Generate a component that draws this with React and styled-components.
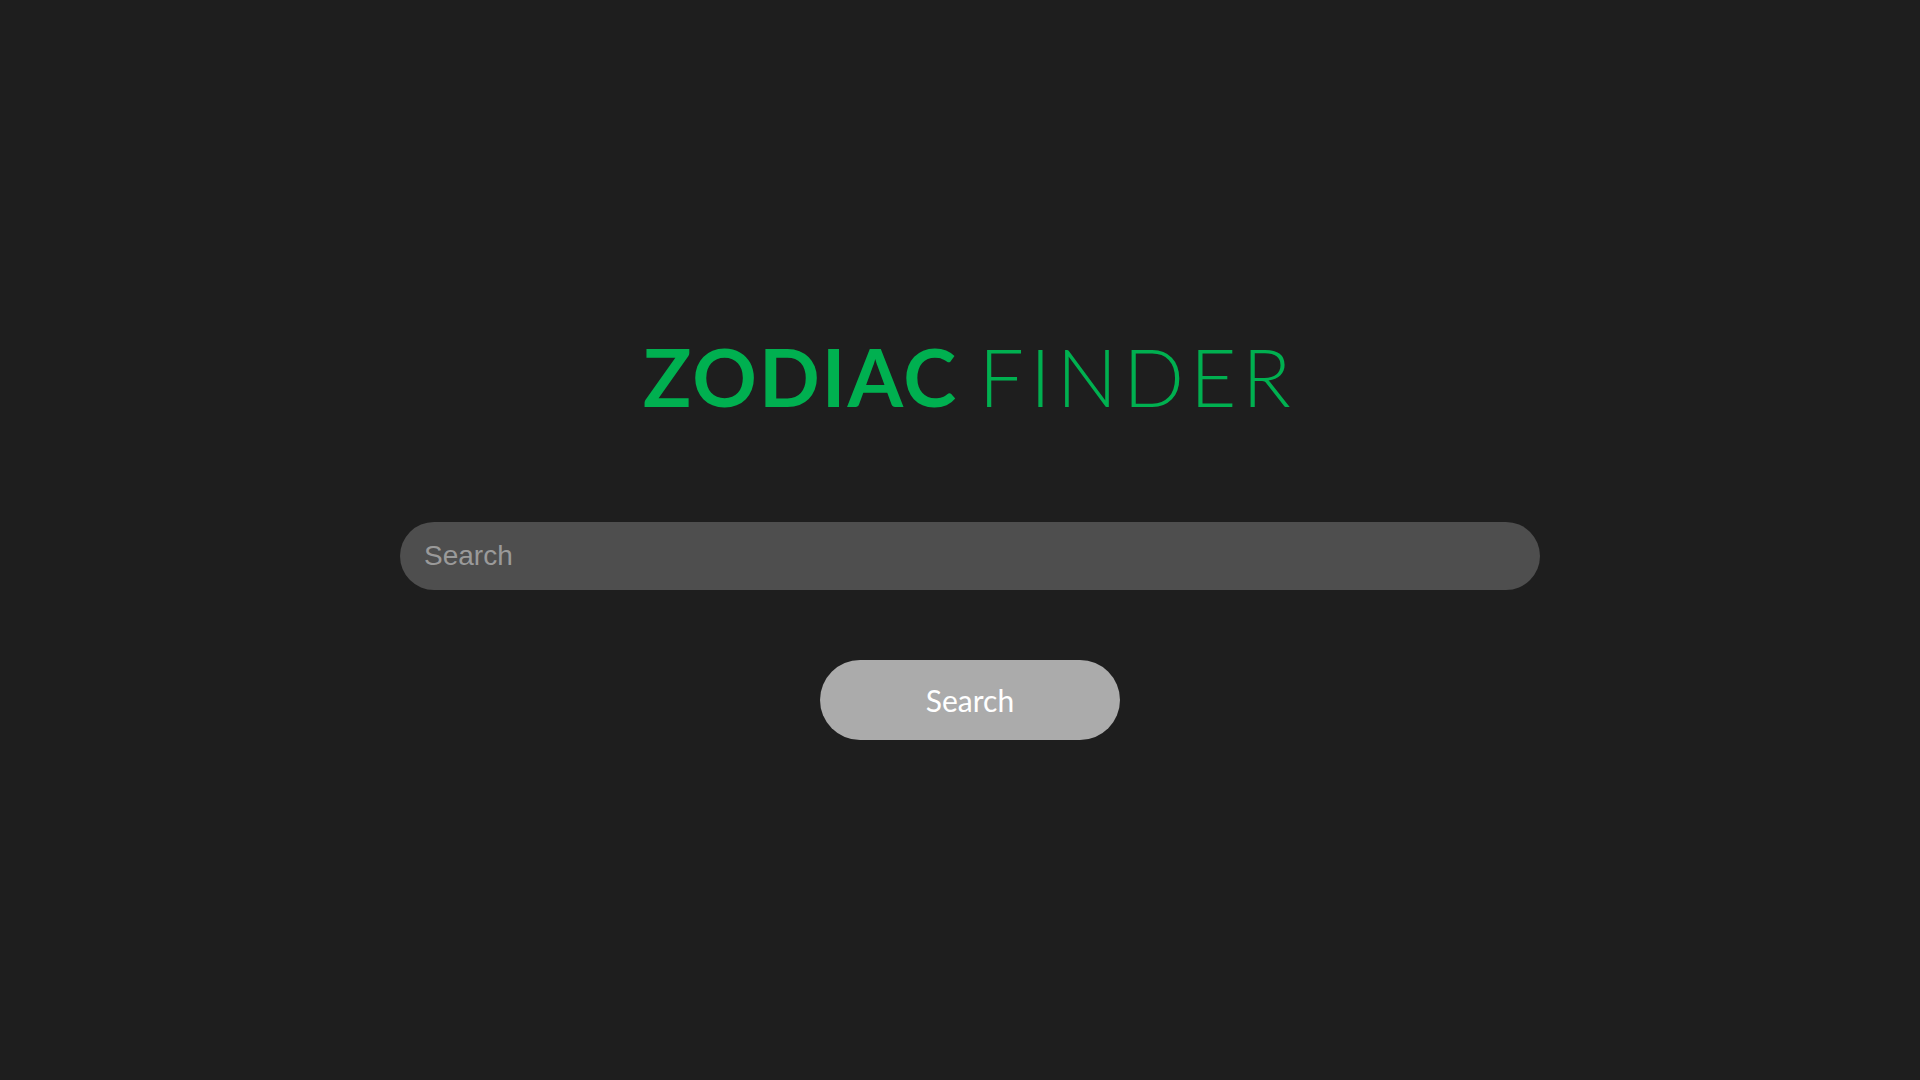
import React from 'react';
import styled, { createGlobalStyle } from 'styled-components';

const GlobalStyle = createGlobalStyle`
  html, body, #root {
    margin: 0;
    padding: 0;
    height: 100%;
  }
  body {
    background-color: #1e1e1e;
    font-family: "Lato", "Noto Sans", sans-serif;
  }
`;

const Page = styled.div`
  box-sizing: border-box;
  height: 100vh;
  padding: 0 0 4px 20px;
  display: flex;
  align-items: center;
  justify-content: center;
`;

const Finder = styled.div`
  width: 1140px;
  display: flex;
  flex-direction: column;
  align-items: center;
`;

const Title = styled.h1`
  margin: 0 0 106px;
  font-size: 80px;
  line-height: 1;
  font-weight: 400;
  color: #00b050;
`;

const Word = styled.span`
  font-weight: ${props => (props.bold ? 700 : 300)};
  letter-spacing: ${props => (props.bold ? '2px' : '6px')};
`;

const SearchInput = styled.input`
  box-sizing: border-box;
  width: 100%;
  height: 68px;
  border: none;
  border-radius: 34px;
  padding: 0 24px;
  background-color: #4e4e4e;
  color: #ddd;
  font-family: "Liberation Sans", Arial, sans-serif;
  font-size: 28px;
  outline: none;

  &::placeholder {
    color: #9a9a9a;
  }
`;

const SearchButton = styled.button`
  margin-top: 70px;
  width: 300px;
  height: 80px;
  border: none;
  border-radius: 40px;
  background-color: #ababab;
  color: #fff;
  font-family: "Lato", "Noto Sans", sans-serif;
  font-size: 30px;
  cursor: pointer;
`;

function App() {
  return (
    <Page>
      <GlobalStyle />
      <Finder>
        <Title>
          <Word bold>ZODIAC</Word> <Word>FINDER</Word>
        </Title>
        <SearchInput type="text" placeholder="Search" />
        <SearchButton>Search</SearchButton>
      </Finder>
    </Page>
  );
}

export default App;
